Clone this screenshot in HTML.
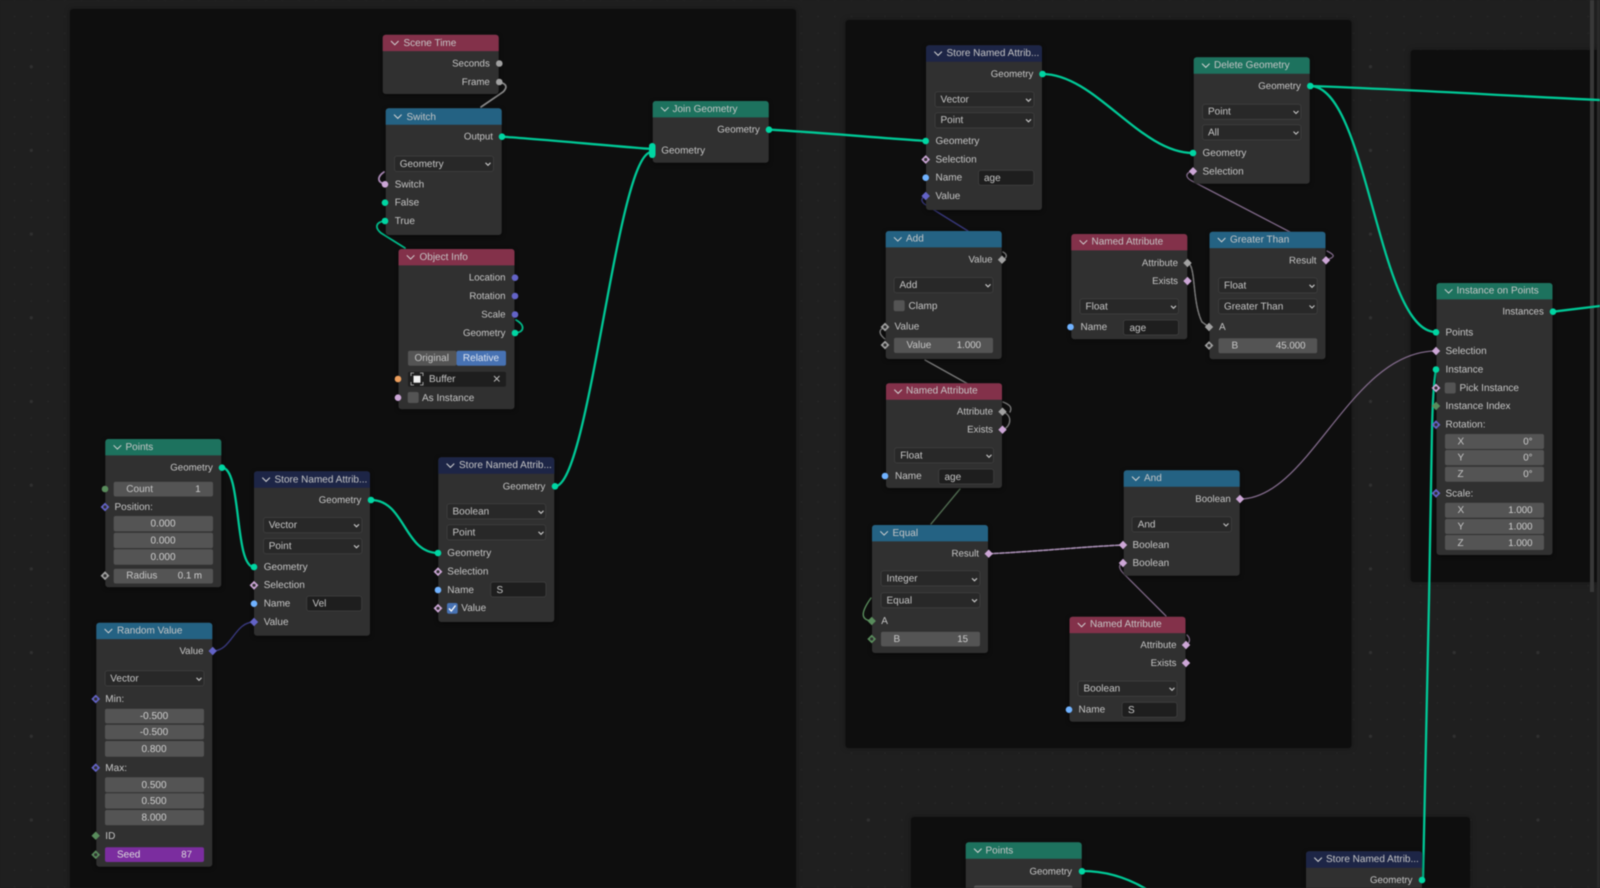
<!DOCTYPE html>
<html><head><meta charset="utf-8"><style>
html,body{margin:0;padding:0;background:#1f1f1f;overflow:hidden;width:1600px;height:888px}
svg{display:block;filter:blur(.45px)}
text{font-family:"Liberation Sans",sans-serif;font-size:10px;fill:#c6c6c6;dominant-baseline:central;text-rendering:geometricPrecision;transform:translateY(.8px)}
.r{text-anchor:end;font-size:9.7px}.m{text-anchor:middle}
.v{fill:#cfcfcf}
.f{fill:#545454}.d{fill:#282828;stroke:#3c3c3c;stroke-width:1}.i{fill:#1e1e1e;stroke:#3c3c3c;stroke-width:1}
.b{fill:#303030}
.l{fill:none;stroke-linecap:round}
.g{stroke:#00c896;stroke-width:2.3}
.p{stroke:#7f6888;stroke-width:1.3}
.y{stroke:#777;stroke-width:1.4}
.u{stroke:#37377a;stroke-width:1.4}
.ge{fill:#00d6a3}.fl{fill:#a1a1a1}.ve{fill:#6363c7}.bo{fill:#cca6d6}.st{fill:#70b2ff}.in{fill:#598c5c}.ob{fill:#ed9e5c}
.hg{fill:#1d725e}.hm{fill:#83314a}.hb{fill:#246283}.hd{fill:#1d2546}
.nodes{filter:drop-shadow(0 1px 2px rgba(0,0,0,.5))}
.fr{filter:drop-shadow(0 0 3px rgba(0,0,0,.35))}
</style></head><body>
<svg width="1600" height="888" viewBox="0 0 1600 888" xmlns="http://www.w3.org/2000/svg">
<defs>
<pattern id="sd" x="14.56" y="16.48" width="16.74" height="16.74" patternUnits="userSpaceOnUse"><circle cx="0" cy="0" r=".8" fill="#292929"/><circle cx="16.74" cy="0" r=".8" fill="#292929"/><circle cx="0" cy="16.74" r=".8" fill="#292929"/><circle cx="16.74" cy="16.74" r=".8" fill="#292929"/></pattern>
<pattern id="bd" x="31.3" y="66.7" width="83.7" height="83.7" patternUnits="userSpaceOnUse"><circle cx="0" cy="0" r="1.6" fill="#303030"/><circle cx="83.7" cy="0" r="1.6" fill="#303030"/><circle cx="0" cy="83.7" r="1.6" fill="#303030"/><circle cx="83.7" cy="83.7" r="1.6" fill="#303030"/></pattern>
<g id="hdr"><path d="M0 16.4V3a3 3 0 0 1 3-3h110a3 3 0 0 1 3 3v13.4z"/><path d="M8.3 6.3l3.8 3.8 3.8-3.8" fill="none" stroke="#d2d2d2" stroke-width="1"/></g>
<path id="c" d="M-2.5 -1.2l2.5 2.5 2.5-2.5" fill="none" stroke="#c6c6c6" stroke-width="1.1"/>
<polygon id="a" points="0,-4.2 4.2,0 0,4.2 -4.2,0"/>
<g id="h"><polygon points="0,-4.4 4.4,0 0,4.4 -4.4,0"/><circle r="1.6" fill="#303030"/></g>
<circle id="o" r="3.3"/>
</defs>
<rect width="1600" height="888" fill="#1f1f1f"/>
<rect width="1600" height="888" fill="url(#sd)"/>
<rect width="1600" height="888" fill="url(#bd)"/>
<!-- frames -->
<g class="fr" fill="#0e0e0e">
<rect x="70" y="9" width="726" height="890" rx="3"/>
<rect x="845.5" y="20" width="506" height="728" rx="3"/>
<rect x="911" y="817" width="559" height="90" rx="3"/>
<rect x="1410.7" y="50" width="200" height="532" rx="3"/>
</g>
<rect x="1590" y="0" width="4" height="592" fill="#383838"/>
<rect x="1597" y="0" width="3" height="888" fill="#292929"/>
<!-- links -->
<g class="l">
<path class="g" d="M502 136.7C540 139 610 146 652 149"/>
<path class="g" d="M555 486.3C590 486 617 150 652 152"/>
<path class="g" d="M769 129.7C815 132 880 138 926 141"/>
<path class="g" d="M1042.5 74C1095 74 1140 153 1193 153"/>
<path class="g" d="M1310 86C1400 89 1510 96 1600 100"/>
<path class="g" d="M1310 86C1368 86 1378 332 1436 332"/>
<path class="g" d="M1553 311.7L1600 306"/>
<path class="g" d="M1423 880L1429 600L1432 430Q1433 385 1436 370"/>
<path class="g" d="M1082 871C1110 871 1135 880 1158 897"/>
<path class="g" d="M222 467.7C242 467.7 234 567 254 567"/>
<path class="g" d="M371 500C405 500 404 553 438 553"/>
<path class="u" d="M212.7 651C232 651 234 622 254 622"/>
<path class="l" stroke="#8a8a8a" stroke-width="1.7" d="M499 82C508 84 507 88 503 92L481 107"/>
<path class="l" stroke="#a988b5" stroke-width="1.8" d="M385 184C376 182 378 176 384 172"/>
<path class="l" stroke="#00b888" stroke-width="1.8" d="M385 221C375 222 375 228 381 233L405 248"/>
<path class="l" stroke="#00b888" stroke-width="1.8" d="M515 333C525 332 525 325 516 320"/>
<path class="u" d="M926 196C920 198 921 202 926 205L968 231"/>
<path class="y" d="M1002 259.7C1008 258 1007 254 1003 252"/>
<path class="y" d="M885 327C877 330 880 335 885 339"/>
<path class="y" stroke-width="1.2" d="M925 360L968 384"/>
<path class="y" d="M1003 402C1011 405 1012 408 1010 412"/>
<path class="y" d="M1003 412C1012 415 1012 425 1003 430"/>
<path class="l" stroke="#4f6a50" stroke-width="1.4" d="M960 489L931 524"/>
<path class="l" stroke="#598c5c" stroke-width="1.4" d="M872 621C860 620 861 612 871 598"/>
<path class="l" stroke="#a98fb5" stroke-width="1.6" stroke-dasharray="4 1.5" d="M989 553.7C1030 552 1080 547 1123 545"/>
<path class="p" d="M1123 563C1117 565 1120 570 1124 574L1166 616"/>
<path class="p" d="M1186 645C1191 642 1190 638 1187 635"/>
<path class="p" d="M1326 260C1336 257 1335 255 1327 251"/>
<path class="p" d="M1193 171C1184 173 1186 178 1192 181L1290 232"/>
<path class="l" stroke="#7a7a7a" stroke-width="1.5" stroke-dasharray="3 1" d="M1188 263C1196 266 1192 302 1202 322L1209 327"/>
<path class="p" d="M1240 499C1310 499 1350 351 1436 351"/>
</g>
<!-- node bodies -->
<g class="nodes">
<rect class="b" x="382.7" y="34.7" width="116" height="59.3" rx="3"/>
<rect class="b" x="385.7" y="108.3" width="116" height="126.7" rx="3"/>
<rect class="b" x="398.5" y="249" width="116" height="160.3" rx="3"/>
<rect class="b" x="652.7" y="101" width="116" height="61.7" rx="3"/>
<rect class="b" x="105.3" y="439" width="116" height="148.3" rx="3"/>
<rect class="b" x="254" y="471.3" width="116" height="164.4" rx="3"/>
<rect class="b" x="438.3" y="457.3" width="116" height="164.7" rx="3"/>
<rect class="b" x="96.3" y="622.7" width="116" height="244" rx="3"/>
<rect class="b" x="926" y="45.3" width="116" height="164.7" rx="3"/>
<rect class="b" x="885.7" y="231" width="116" height="128" rx="3"/>
<rect class="b" x="1071.3" y="234" width="116" height="105.3" rx="3"/>
<rect class="b" x="1193.7" y="57.3" width="116" height="126.4" rx="3"/>
<rect class="b" x="1209.5" y="231.7" width="116" height="127.6" rx="3"/>
<rect class="b" x="1436.5" y="283" width="116" height="272" rx="3"/>
<rect class="b" x="886" y="383.3" width="116" height="104.7" rx="3"/>
<rect class="b" x="872" y="525" width="116" height="128" rx="3"/>
<rect class="b" x="1123.7" y="470.3" width="116" height="105.4" rx="3"/>
<rect class="b" x="1069.5" y="616.7" width="116" height="105" rx="3"/>
<rect class="b" x="965.7" y="842.3" width="116" height="60" rx="3"/>
<rect class="b" x="1306" y="851.3" width="116" height="60" rx="3"/>
</g>
<!-- headers -->
<use href="#hdr" x="382.7" y="34.7" class="hm"/><text x="403.5" y="42.7">Scene Time</text>
<use href="#hdr" x="385.7" y="108.3" class="hb"/><text x="406.5" y="116.5">Switch</text>
<use href="#hdr" x="398.5" y="249" class="hm"/><text x="419.5" y="256.5">Object Info</text>
<use href="#hdr" x="652.7" y="101" class="hg"/><text x="672.5" y="108.5">Join Geometry</text>
<use href="#hdr" x="105.3" y="439" class="hg"/><text x="125.5" y="446.5">Points</text>
<use href="#hdr" x="254" y="471.3" class="hd"/><text x="274.5" y="479.2">Store Named Attrib...</text>
<use href="#hdr" x="438.3" y="457.3" class="hd"/><text x="459" y="464.8">Store Named Attrib...</text>
<use href="#hdr" x="96.3" y="622.7" class="hb"/><text x="117" y="630">Random Value</text>
<use href="#hdr" x="926" y="45.3" class="hd"/><text x="946.5" y="52.5">Store Named Attrib...</text>
<use href="#hdr" x="885.7" y="231" class="hb"/><text x="906" y="238">Add</text>
<use href="#hdr" x="1071.3" y="234" class="hm"/><text x="1091.5" y="241.2">Named Attribute</text>
<use href="#hdr" x="1193.7" y="57.3" class="hg"/><text x="1214" y="64.5">Delete Geometry</text>
<use href="#hdr" x="1209.5" y="231.7" class="hb"/><text x="1230" y="239">Greater Than</text>
<use href="#hdr" x="1436.5" y="283" class="hg"/><text x="1456.5" y="290">Instance on Points</text>
<use href="#hdr" x="886" y="383.3" class="hm"/><text x="906" y="390">Named Attribute</text>
<use href="#hdr" x="872" y="525" class="hb"/><text x="892.5" y="532.5">Equal</text>
<use href="#hdr" x="1123.7" y="470.3" class="hb"/><text x="1144" y="477.5">And</text>
<use href="#hdr" x="1069.5" y="616.7" class="hm"/><text x="1090" y="623.7">Named Attribute</text>
<use href="#hdr" x="965.7" y="842.3" class="hg"/><text x="985.5" y="850">Points</text>
<use href="#hdr" x="1306" y="851.3" class="hd"/><text x="1326" y="858.5">Store Named Attrib...</text>
<!-- Scene Time -->
<text class="r" x="489.8" y="63">Seconds</text><text class="r" x="489.8" y="81.5">Frame</text>
<use href="#o" x="499.3" y="63.5" class="fl"/><use href="#o" x="499.3" y="82" class="fl"/>
<!-- Switch -->
<text class="r" x="493" y="136.2">Output</text><use href="#o" x="502" y="136.7" class="ge"/>
<rect class="d" x="394.5" y="156" width="99" height="15.5" rx="2.5"/><text x="399.7" y="163.5">Geometry</text><use href="#c" x="488" y="164"/>
<text x="394.7" y="184">Switch</text><use href="#o" x="385" y="184.3" class="bo"/>
<text x="394.7" y="202.3">False</text><use href="#o" x="385" y="202.7" class="ge"/>
<text x="394.7" y="220.7">True</text><use href="#o" x="385" y="221" class="ge"/>
<!-- Object Info -->
<text class="r" x="505.5" y="277.3">Location</text><use href="#o" x="515" y="277.7" class="ve"/>
<text class="r" x="505.5" y="295.7">Rotation</text><use href="#o" x="515" y="296" class="ve"/>
<text class="r" x="505.5" y="314">Scale</text><use href="#o" x="515" y="314.5" class="ve"/>
<text class="r" x="505.5" y="332.6">Geometry</text><use href="#o" x="515" y="333" class="ge"/>
<rect x="408" y="350.7" width="48.5" height="15" rx="2" fill="#545454"/><rect x="456.5" y="350.7" width="49.5" height="15" rx="2" fill="#4772b3"/>
<text class="m" x="431.7" y="357.7">Original</text><text class="m v" x="481" y="357.7" style="fill:#dde3ee">Relative</text>
<rect x="408" y="371.7" width="98" height="15" rx="2" fill="#1e1e1e"/>
<rect x="413.5" y="375.7" width="7" height="7" fill="#f0f0f0"/>
<path d="M411 376v-3h3M420 373h3v3M423 382v3h-3M414 385h-3v-3" fill="none" stroke="#bdbdbd" stroke-width=".8"/>
<text x="429" y="378.8">Buffer</text>
<path d="M494 376l5.5 5.5M499.5 376l-5.5 5.5" stroke="#bdbdbd" stroke-width=".9"/>
<use href="#o" x="398" y="379" class="ob"/>
<rect x="407.7" y="392" width="11" height="11" rx="2" fill="#545454"/><text x="422" y="397.5">As Instance</text><use href="#o" x="398" y="397.7" class="bo"/>
<!-- Join -->
<text class="r" x="759.8" y="129.3">Geometry</text><use href="#o" x="769" y="129.7" class="ge"/>
<text x="661.2" y="150.3">Geometry</text><rect x="649" y="143" width="6.5" height="15" rx="3.2" class="ge"/>
<!-- Points -->
<text class="r" x="212.8" y="467.3">Geometry</text><use href="#o" x="222" y="467.7" class="ge"/>
<use href="#o" x="105" y="489" class="in"/>
<rect class="f" x="113.7" y="481.7" width="99.3" height="14.8" rx="2"/><text x="126.3" y="488.7">Count</text><text class="r v" x="200.7" y="488.7">1</text>
<text x="114.5" y="506.7">Position:</text><use href="#h" x="105" y="507" class="ve"/>
<rect class="f" x="113.7" y="516" width="99.3" height="15.4" rx="2"/><text class="m v" x="163" y="523.3">0.000</text>
<rect class="f" x="113.7" y="532.7" width="99.3" height="15.4" rx="2"/><text class="m v" x="163" y="540">0.000</text>
<rect class="f" x="113.7" y="549.3" width="99.3" height="15.4" rx="2"/><text class="m v" x="163" y="556.7">0.000</text>
<rect class="f" x="113.7" y="568.7" width="99.3" height="14.8" rx="2"/><text x="126.3" y="575.3">Radius</text><text class="r v" x="202" y="575.3">0.1 m</text>
<use href="#h" x="105" y="575.7" class="fl"/>
<!-- Store 1 -->
<text class="r" x="361.3" y="499.6">Geometry</text><use href="#o" x="371" y="500" class="ge"/>
<rect class="d" x="263.5" y="517.5" width="98.5" height="15.2" rx="2.5"/><text x="268.7" y="524.7">Vector</text><use href="#c" x="356.5" y="525.5"/>
<rect class="d" x="263.5" y="538.5" width="98.5" height="15.2" rx="2.5"/><text x="268.7" y="545.7">Point</text><use href="#c" x="356.5" y="546.5"/>
<text x="263.7" y="566.7">Geometry</text><use href="#o" x="254" y="567" class="ge"/>
<text x="263.7" y="584.7">Selection</text><use href="#h" x="254" y="585.3" class="bo"/>
<text x="263.7" y="603.3">Name</text><use href="#o" x="254" y="603.7" class="st"/>
<rect class="i" x="306.7" y="596" width="55" height="15" rx="2.5"/><text x="312.5" y="603.3">Vel</text>
<text x="263.7" y="621.7">Value</text><use href="#a" x="254" y="622" class="ve"/>
<!-- Store 2 -->
<text class="r" x="545.3" y="486">Geometry</text><use href="#o" x="555" y="486.3" class="ge"/>
<rect class="d" x="447" y="503.8" width="98.7" height="15.2" rx="2.5"/><text x="452.5" y="511">Boolean</text><use href="#c" x="541" y="512"/>
<rect class="d" x="447" y="524.8" width="98.7" height="15.2" rx="2.5"/><text x="452.5" y="532">Point</text><use href="#c" x="541" y="533"/>
<text x="447.3" y="552.7">Geometry</text><use href="#o" x="438" y="553" class="ge"/>
<text x="447.3" y="571.3">Selection</text><use href="#h" x="438" y="571.7" class="bo"/>
<text x="447.3" y="589.7">Name</text><use href="#o" x="438" y="590" class="st"/>
<rect class="i" x="490.7" y="582" width="55.3" height="15" rx="2.5"/><text x="496.5" y="589.5">S</text>
<rect x="447" y="603" width="10.7" height="10.7" rx="2" fill="#4772b3"/><path d="M449 608.5l2.3 2.5 4.2-5.5" fill="none" stroke="#fff" stroke-width="1.3"/>
<text x="461.3" y="607.7">Value</text><use href="#h" x="438" y="608.3" class="bo"/>
<!-- Random Value -->
<text class="r" x="203.5" y="650.7">Value</text><use href="#a" x="212.7" y="651" class="ve"/>
<rect class="d" x="105" y="670.8" width="99" height="15.2" rx="2.5"/><text x="110.3" y="678">Vector</text><use href="#c" x="199" y="679"/>
<text x="105.3" y="698.7">Min:</text><use href="#h" x="95.7" y="699" class="ve"/>
<rect class="f" x="105" y="708.7" width="99" height="14.7" rx="2"/><text class="m v" x="154" y="715.7">-0.500</text>
<rect class="f" x="105" y="724.7" width="99" height="14.7" rx="2"/><text class="m v" x="154" y="731.8">-0.500</text>
<rect class="f" x="105" y="741" width="99" height="15.7" rx="2"/><text class="m v" x="154" y="748.5">0.800</text>
<text x="105.3" y="767.5">Max:</text><use href="#h" x="95.7" y="767.7" class="ve"/>
<rect class="f" x="105" y="777.3" width="99" height="15" rx="2"/><text class="m v" x="154" y="784.5">0.500</text>
<rect class="f" x="105" y="793.3" width="99" height="15.3" rx="2"/><text class="m v" x="154" y="800.5">0.500</text>
<rect class="f" x="105" y="810" width="99" height="15.3" rx="2"/><text class="m v" x="154" y="817">8.000</text>
<text x="105.3" y="835.5">ID</text><use href="#a" x="95.7" y="835.7" class="in"/>
<rect x="105" y="847.3" width="99" height="14.7" rx="2" fill="#7b2d9f"/><text x="117" y="854.3" style="fill:#ddd">Seed</text><text class="r" x="192" y="854.3" style="fill:#ddd">87</text>
<use href="#h" x="95.7" y="854.7" class="in"/>
<!-- Store 3 -->
<text class="r" x="1033.3" y="73.7">Geometry</text><use href="#o" x="1042.5" y="74" class="ge"/>
<rect class="d" x="935" y="91.8" width="99" height="15.2" rx="2.5"/><text x="940.5" y="99">Vector</text><use href="#c" x="1028.5" y="100"/>
<rect class="d" x="935" y="112.8" width="99" height="15.2" rx="2.5"/><text x="940.5" y="119.5">Point</text><use href="#c" x="1028.5" y="120.5"/>
<text x="935.5" y="140.7">Geometry</text><use href="#o" x="925.7" y="141" class="ge"/>
<text x="935.5" y="159.3">Selection</text><use href="#h" x="925.7" y="159.5" class="bo"/>
<text x="935.5" y="177.4">Name</text><use href="#o" x="925.7" y="177.7" class="st"/>
<rect class="i" x="978.5" y="170.3" width="55.3" height="15" rx="2.5"/><text x="984" y="177.7">age</text>
<text x="935.5" y="195.8">Value</text><use href="#a" x="925.7" y="196" class="ve"/>
<!-- Add -->
<text class="r" x="992.5" y="259.3">Value</text><use href="#a" x="1002" y="259.7" class="fl"/>
<rect class="d" x="894" y="277.5" width="99" height="15.2" rx="2.5"/><text x="899.5" y="284.7">Add</text><use href="#c" x="988" y="285.5"/>
<rect x="893.7" y="300.3" width="11" height="11" rx="2" fill="#545454"/><text x="908.5" y="305.7">Clamp</text>
<text x="894.5" y="326.3">Value</text><use href="#h" x="885" y="327" class="fl"/>
<rect class="f" x="894" y="337.7" width="99" height="15.3" rx="2"/><text x="906.5" y="344.7">Value</text><text class="r v" x="981" y="344.7">1.000</text>
<use href="#h" x="885" y="345" class="fl"/>
<!-- NA 1 -->
<text class="r" x="1178" y="262.7">Attribute</text><use href="#a" x="1187.5" y="263" class="fl"/>
<text class="r" x="1178" y="280.7">Exists</text><use href="#a" x="1187.5" y="281" class="bo"/>
<rect class="d" x="1080" y="298.8" width="98.5" height="15.2" rx="2.5"/><text x="1085.5" y="306">Float</text><use href="#c" x="1173.5" y="307"/>
<text x="1080.5" y="326.8">Name</text><use href="#o" x="1070.5" y="327" class="st"/>
<rect class="i" x="1123.5" y="320" width="55" height="15" rx="2.5"/><text x="1129.5" y="327.5">age</text>
<!-- Delete -->
<text class="r" x="1300.8" y="85.7">Geometry</text><use href="#o" x="1310.3" y="86" class="ge"/>
<rect class="d" x="1202.5" y="104.2" width="98.5" height="15.2" rx="2.5"/><text x="1208" y="111.3">Point</text><use href="#c" x="1296" y="112.2"/>
<rect class="d" x="1202.5" y="124.8" width="98.5" height="15.2" rx="2.5"/><text x="1208" y="132">All</text><use href="#c" x="1296" y="132.8"/>
<text x="1202.5" y="152.8">Geometry</text><use href="#o" x="1193" y="153" class="ge"/>
<text x="1202.5" y="171">Selection</text><use href="#a" x="1193" y="171.3" class="bo"/>
<!-- Greater Than -->
<text class="r" x="1316.5" y="260">Result</text><use href="#a" x="1326" y="260.3" class="bo"/>
<rect class="d" x="1218.5" y="277.8" width="98.7" height="15.2" rx="2.5"/><text x="1224" y="285">Float</text><use href="#c" x="1312" y="286"/>
<rect class="d" x="1218.5" y="298.8" width="98.7" height="15.2" rx="2.5"/><text x="1224" y="306">Greater Than</text><use href="#c" x="1312" y="306.7"/>
<text x="1219" y="326.7">A</text><use href="#a" x="1209" y="327" class="fl"/>
<rect class="f" x="1218.5" y="338.3" width="98.7" height="15" rx="2"/><text x="1231.5" y="345.3">B</text><text class="r v" x="1305.5" y="345.3">45.000</text>
<use href="#h" x="1209" y="345.5" class="fl"/>
<!-- Instance on Points -->
<text class="r" x="1543.8" y="311.3">Instances</text><use href="#o" x="1553" y="311.7" class="ge"/>
<text x="1445.5" y="332">Points</text><use href="#o" x="1436" y="332.3" class="ge"/>
<text x="1445.5" y="350.7">Selection</text><use href="#a" x="1436" y="351" class="bo"/>
<text x="1445.5" y="369.2">Instance</text><use href="#o" x="1436" y="369.5" class="ge"/>
<rect x="1444.7" y="382.5" width="11" height="11" rx="2" fill="#545454"/><text x="1459.5" y="387.7">Pick Instance</text><use href="#h" x="1436" y="388" class="bo"/>
<text x="1445.5" y="405.7">Instance Index</text><use href="#a" x="1436" y="406" class="in"/>
<text x="1445.5" y="424.4">Rotation:</text><use href="#h" x="1436" y="424.7" class="ve"/>
<rect class="f" x="1445" y="434" width="99" height="15" rx="2"/><text x="1457.5" y="441">X</text><text class="r v" x="1532.5" y="441">0°</text>
<rect class="f" x="1445" y="450" width="99" height="15.3" rx="2"/><text x="1457.5" y="457.3">Y</text><text class="r v" x="1532.5" y="457.3">0°</text>
<rect class="f" x="1445" y="466.7" width="99" height="15" rx="2"/><text x="1457.5" y="473.7">Z</text><text class="r v" x="1532.5" y="473.7">0°</text>
<text x="1445.5" y="493">Scale:</text><use href="#h" x="1436" y="493.3" class="ve"/>
<rect class="f" x="1445" y="502.7" width="99" height="15" rx="2"/><text x="1457.5" y="509.7">X</text><text class="r v" x="1532.5" y="509.7">1.000</text>
<rect class="f" x="1445" y="519" width="99" height="15" rx="2"/><text x="1457.5" y="526">Y</text><text class="r v" x="1532.5" y="526">1.000</text>
<rect class="f" x="1445" y="535" width="99" height="15" rx="2"/><text x="1457.5" y="542.5">Z</text><text class="r v" x="1532.5" y="542.5">1.000</text>
<!-- NA 2 -->
<text class="r" x="993" y="411.3">Attribute</text><use href="#a" x="1002.5" y="411.7" class="fl"/>
<text class="r" x="993" y="429.3">Exists</text><use href="#a" x="1002.5" y="429.7" class="bo"/>
<rect class="d" x="894.5" y="447.8" width="99" height="15.2" rx="2.5"/><text x="900.3" y="455">Float</text><use href="#c" x="989" y="456"/>
<text x="895" y="475.7">Name</text><use href="#o" x="885" y="476" class="st"/>
<rect class="i" x="938.7" y="469" width="55" height="15" rx="2.5"/><text x="944.5" y="476.5">age</text>
<!-- Equal -->
<text class="r" x="979" y="553.3">Result</text><use href="#a" x="988.7" y="553.7" class="bo"/>
<rect class="d" x="881" y="570.8" width="99" height="15.2" rx="2.5"/><text x="886.5" y="578">Integer</text><use href="#c" x="974.5" y="579.5"/>
<rect class="d" x="881" y="592.8" width="99" height="15" rx="2.5"/><text x="886.5" y="600">Equal</text><use href="#c" x="974.5" y="600.5"/>
<text x="881.3" y="620.7">A</text><use href="#a" x="871.7" y="621" class="in"/>
<rect class="f" x="881" y="631.7" width="99" height="14.7" rx="2"/><text x="893.5" y="638.5">B</text><text class="r v" x="968" y="638.5">15</text>
<use href="#h" x="871.7" y="639" class="in"/>
<!-- And -->
<text class="r" x="1230.8" y="498.7">Boolean</text><use href="#a" x="1240" y="499" class="bo"/>
<rect class="d" x="1132" y="516.8" width="99.5" height="15.2" rx="2.5"/><text x="1137.7" y="524">And</text><use href="#c" x="1226" y="524.7"/>
<text x="1132.5" y="544.7">Boolean</text><use href="#a" x="1123" y="545" class="bo"/>
<text x="1132.5" y="562.7">Boolean</text><use href="#a" x="1123" y="563" class="bo"/>
<!-- NA 3 -->
<text class="r" x="1176.5" y="644.7">Attribute</text><use href="#a" x="1186" y="645" class="bo"/>
<text class="r" x="1176.5" y="662.7">Exists</text><use href="#a" x="1186" y="663" class="bo"/>
<rect class="d" x="1078" y="681" width="99" height="15.2" rx="2.5"/><text x="1083.5" y="688">Boolean</text><use href="#c" x="1172" y="689"/>
<text x="1078.5" y="709.4">Name</text><use href="#o" x="1069" y="709.7" class="st"/>
<rect class="i" x="1122" y="702.3" width="55" height="15" rx="2.5"/><text x="1128" y="709.7">S</text>
<!-- bottom nodes -->
<text class="r" x="1072" y="871">Geometry</text><use href="#o" x="1082" y="871.3" class="ge"/>
<rect class="f" x="974" y="885.5" width="98.5" height="15" rx="2"/>
<text class="r" x="1412.5" y="879.7">Geometry</text><use href="#o" x="1422" y="880" class="ge"/>
</svg>
</body></html>
